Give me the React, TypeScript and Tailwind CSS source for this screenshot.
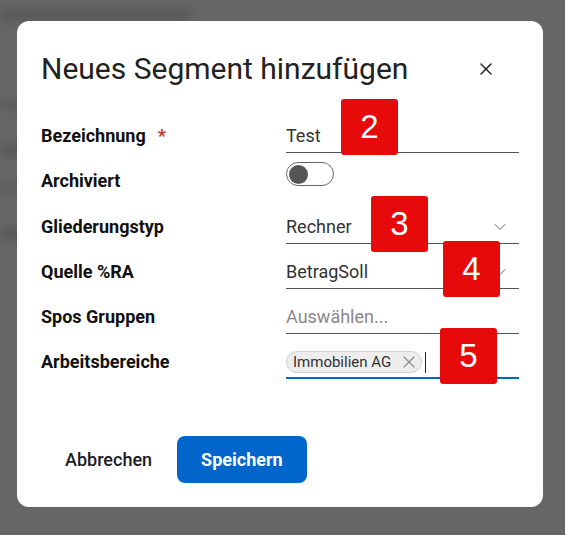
import React, { useState } from 'react'
import { ChevronDown, X } from 'lucide-react'

type Row = {
  label: string
  required?: boolean
  kind: 'text' | 'toggle' | 'select' | 'placeholder' | 'tags'
  value?: string
}

const rows: Row[] = [
  { label: 'Bezeichnung', required: true, kind: 'text', value: 'Test' },
  { label: 'Archiviert', kind: 'toggle' },
  { label: 'Gliederungstyp', kind: 'select', value: 'Rechner' },
  { label: 'Quelle %RA', kind: 'select', value: 'BetragSoll' },
  { label: 'Spos Gruppen', kind: 'placeholder', value: 'Auswählen...' },
  { label: 'Arbeitsbereiche', kind: 'tags' },
]

// numbered step markers laid over the dialog
const markers = [
  { n: 2, className: 'left-[341px] top-[99px]' },
  { n: 3, className: 'left-[371px] top-[196px]' },
  { n: 4, className: 'left-[443px] top-[241px]' },
  { n: 5, className: 'left-[440px] top-[328px]' },
]

function Field({ row }: { row: Row }) {
  const [archived, setArchived] = useState(false)

  if (row.kind === 'toggle') {
    return (
      <div className="h-[34px]">
        <button
          onClick={() => setArchived(!archived)}
          className="-mt-[3px] flex h-6 w-12 items-center rounded-full border border-[#666] bg-white px-[2px]"
        >
          <span className="h-[19px] w-[19px] rounded-full bg-[#555]" />
        </button>
      </div>
    )
  }

  if (row.kind === 'tags') {
    return (
      <div className="flex h-[33px] items-center border-b-2 border-[#0066cc] pt-px">
        <span className="flex h-[22px] items-center gap-[12px] rounded-full border border-[#cfcfcf] bg-[#ededed] pl-[6px] pr-[6px] text-[15px] text-[#333]">
          Immobilien AG
          <X size={20} strokeWidth={1.3} className="-mx-[4px] text-[#888]" />
        </span>
        <span className="ml-[3px] h-[21px] w-px bg-[#222]" />
      </div>
    )
  }

  return (
    <div className="flex items-center justify-between border-b border-[#555] py-1 leading-6">
      <span className={row.kind === 'placeholder' ? 'text-[#888]' : 'text-[#333]'}>{row.value}</span>
      {row.kind === 'select' && (
        <ChevronDown size={20} strokeWidth={1.2} className="mr-[9px] text-[#666]" />
      )}
    </div>
  )
}

export default function App() {
  return (
    <div className="relative h-[535px] w-[565px] overflow-hidden bg-[#666] font-['Roboto','Liberation_Sans',sans-serif]">
      {/* page behind the overlay, blurred */}
      <div className="absolute inset-0 blur-[5px]">
        <div className="ml-0 mt-[9px] h-[12px] w-[190px] bg-[#585858]" />
        <div className="mt-[80px] h-[8px] w-[30px] bg-[#5a5a5a]" />
        <div className="mt-[36px] h-[10px] w-[30px] bg-[#585858]" />
        <div className="mt-[28px] h-[8px] w-[30px] bg-[#5c5c5c]" />
        <div className="mt-[38px] h-[10px] w-[30px] bg-[#585858]" />
      </div>

      <div className="relative ml-[17px] mt-[21px] w-[526px] rounded-xl bg-white px-6 pb-6 pt-[28px] text-[18px]">
        <div className="flex items-center justify-between">
          <h2 className="text-[30px] font-normal leading-9 text-[#222]">Neues Segment hinzufügen</h2>
          <button className="mr-[13px] flex h-10 w-10 items-center justify-center text-[#222]">
            <X size={20} strokeWidth={1.7} />
          </button>
        </div>

        <div className="mt-[31px] flex flex-col gap-3">
          {rows.map((row) => (
            <div key={row.label} className="grid grid-cols-[245px_233px]">
              <div className="py-1 font-bold leading-6 text-[#111]">
                {row.label}
                {row.required && <span className="ml-[12px] text-[#c0392b]">*</span>}
              </div>
              <Field row={row} />
            </div>
          ))}
        </div>

        <div className="mt-[57px] flex gap-px">
          <button className="h-[47px] px-6 font-medium text-[#1c1c28]">Abbrechen</button>
          <button className="h-[47px] rounded-lg bg-[#0066cc] px-6 font-bold text-white">Speichern</button>
        </div>
      </div>

      {markers.map((m) => (
        <div
          key={m.n}
          className={`absolute flex h-[56px] w-[57px] items-center justify-center rounded-[3px] bg-[#e60a0a] font-['Liberation_Sans',sans-serif] text-[33px] text-white ${m.className}`}
        >
          {m.n}
        </div>
      ))}
    </div>
  )
}
